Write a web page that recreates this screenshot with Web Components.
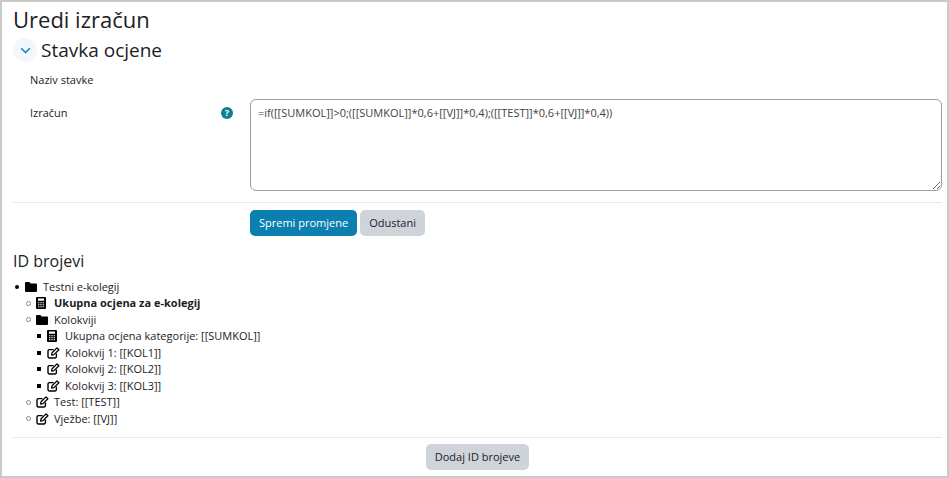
<!DOCTYPE html>
<html>
<head>
<meta charset="utf-8">
<title>Uredi izračun</title>
<style>
    html, body { margin: 0; padding: 0; background: #fff; }
    body { font-family: "Open Sans", "Liberation Sans", sans-serif; color: #1d2125; }
</style>
</head>
<body>
<calc-page>
    <page-title>Uredi izračun</page-title>
    <section-head>Stavka ocjene</section-head>
    <form-row label="Naziv stavke" style="--top: 4px; --row-h: 33px"></form-row>
    <form-row label="Izračun" help>
        <formula-box>=if([[SUMKOL]]&gt;0;([[SUMKOL]]*0,6+[[VJ]]*0,4);([[TEST]]*0,6+[[VJ]]*0,4))</formula-box>
    </form-row>
    <h-rule style="--top: 11px"></h-rule>
    <form-row style="--top: 7px">
        <div style="display:flex;gap:3px">
            <app-button primary>Spremi promjene</app-button>
            <app-button>Odustani</app-button>
        </div>
    </form-row>
    <sub-title>ID brojevi</sub-title>
    <id-tree>
        <tree-node marker="disc" icon="folder">Testni e-kolegij
            <tree-node slot="kids" marker="circle" icon="calc"><b>Ukupna ocjena za e-kolegij</b></tree-node>
            <tree-node slot="kids" marker="circle" icon="folder">Kolokviji
                <tree-node slot="kids" marker="square" icon="calc">Ukupna ocjena kategorije: [[SUMKOL]]</tree-node>
                <tree-node slot="kids" marker="square" icon="edit">Kolokvij 1: [[KOL1]]</tree-node>
                <tree-node slot="kids" marker="square" icon="edit">Kolokvij 2: [[KOL2]]</tree-node>
                <tree-node slot="kids" marker="square" icon="edit">Kolokvij 3: [[KOL3]]</tree-node>
            </tree-node>
            <tree-node slot="kids" marker="circle" icon="edit">Test: [[TEST]]</tree-node>
            <tree-node slot="kids" marker="circle" icon="edit">Vježbe: [[VJ]]</tree-node>
        </tree-node>
    </id-tree>
    <h-rule style="--top: 9.5px"></h-rule>
    <div style="display:flex;justify-content:center;margin-top:6px">
        <app-button>Dodaj ID brojeve</app-button>
    </div>
</calc-page>

<script>
function shadow(el, html) {
    el.attachShadow({mode: 'open'}).innerHTML = html
}

class CalcPage extends HTMLElement {
    connectedCallback() {
        shadow(this, `
        <style>
            :host {
                display: block;
                box-sizing: border-box;
                width: 949px;
                height: 478px;
                border: 2px solid #c9c9c9;
                padding: 1px 5px 0 11px;
                overflow: hidden;
                font-size: 11px;
            }
        </style>
        <slot></slot>`)
    }
}

class PageTitle extends HTMLElement {
    connectedCallback() {
        shadow(this, `
        <style>
            :host { display: block; font-size: 22px; line-height: 32px; }
        </style>
        <slot></slot>`)
    }
}

class SectionHead extends HTMLElement {
    connectedCallback() {
        shadow(this, `
        <style>
            :host {
                display: flex;
                align-items: center;
                gap: 4px;
                font-size: 19px;
                line-height: 24px;
                margin-top: 3px;
            }
            .toggle {
                width: 24px;
                height: 24px;
                border-radius: 50%;
                background: #f2f7fb;
                display: flex;
                align-items: center;
                justify-content: center;
            }
        </style>
        <span class="toggle">
            <svg width="11" height="7" viewBox="0 0 11 7"><path d="M1.2 1.2l4.3 4.2 4.3-4.2" fill="none" stroke="#0f7cb5" stroke-width="1.4"/></svg>
        </span>
        <slot></slot>`)
    }
}

class FormRow extends HTMLElement {
    connectedCallback() {
        const label = this.getAttribute('label') || ''
        const help = this.hasAttribute('help')
            ? `<svg class="help" width="12" height="12" viewBox="0 0 12 12"><circle cx="6" cy="6" r="6" fill="#0f7f8f"/><text x="6" y="9.2" text-anchor="middle" font-size="9" font-weight="700" font-family="Open Sans" fill="#fff">?</text></svg>`
            : ''
        shadow(this, `
        <style>
            :host {
                display: grid;
                grid-template-columns: 237px 1fr;
                margin-top: var(--top, 0);
                min-height: var(--row-h, 0);
                font-size: 11px;
            }
            .label {
                display: flex;
                align-items: flex-start;
                justify-content: space-between;
                padding: 6px 17px 0 17px;
                line-height: 16px;
            }
            .help { margin-top: 2px; }
        </style>
        <div class="label"><span>${label}</span>${help}</div>
        <div><slot></slot></div>`)
    }
}

class FormulaBox extends HTMLElement {
    connectedCallback() {
        shadow(this, `
        <style>
            :host {
                display: block;
                box-sizing: border-box;
                width: 692px;
                height: 92px;
                border: 1px solid #9aa0a6;
                border-radius: 6px;
                padding: 5px 7px;
                font-size: 11px;
                line-height: 16px;
                color: #3c4247;
                resize: both;
                overflow: auto;
            }
        </style>
        <slot></slot>`)
    }
}

class HRule extends HTMLElement {
    connectedCallback() {
        shadow(this, `
        <style>
            :host {
                display: block;
                height: 1px;
                background: #e6e8ea;
                margin-top: var(--top, 0);
            }
        </style>`)
    }
}

class AppButton extends HTMLElement {
    connectedCallback() {
        shadow(this, `
        <style>
            :host {
                display: inline-block;
                box-sizing: border-box;
                height: 26px;
                line-height: 26px;
                padding: 0 9px;
                border-radius: 5px;
                font-size: 11px;
                background: #ced4da;
                color: #1d2125;
                white-space: nowrap;
            }
            :host([primary]) {
                background: #0a7fb0;
                color: #fff;
            }
        </style>
        <slot></slot>`)
    }
}

class SubTitle extends HTMLElement {
    connectedCallback() {
        shadow(this, `
        <style>
            :host {
                display: block;
                font-size: 16px;
                line-height: 24px;
                margin-top: 13px;
            }
        </style>
        <slot></slot>`)
    }
}

class IdTree extends HTMLElement {
    connectedCallback() {
        shadow(this, `
        <style>
            :host { display: block; margin-top: 5.7px; font-size: 11px; }
        </style>
        <slot></slot>`)
    }
}

const ICONS = {
    folder: `<svg width="12" height="10" viewBox="0 0 12 10"><path d="M1 0h3.4l1.3 1.4H11a1 1 0 0 1 1 1V9a1 1 0 0 1-1 1H1a1 1 0 0 1-1-1V1a1 1 0 0 1 1-1z" fill="#000"/></svg>`,
    calc: `<svg width="10" height="12" viewBox="0 0 10 12"><path fill-rule="evenodd" fill="#000" d="M1 0h8a1 1 0 0 1 1 1v10a1 1 0 0 1-1 1H1a1 1 0 0 1-1-1V1a1 1 0 0 1 1-1zM2 1.6v2.2h6V1.6zM2 5.2v1h1.4v-1zM4.3 5.2v1h1.4v-1zM6.6 5.2v1H8v-1zM2 7.2v1h1.4v-1zM4.3 7.2v1h1.4v-1zM6.6 7.2v1H8v-1zM2 9.2v1h1.4v-1zM4.3 9.2v1h1.4v-1zM6.6 9.2v1H8v-1z"/></svg>`,
    edit: `<svg width="13" height="12" viewBox="0 0 13 12"><path d="M9.4 6.6v3a1.4 1.4 0 0 1-1.4 1.4H2.4A1.4 1.4 0 0 1 1 9.6V4a1.4 1.4 0 0 1 1.4-1.4h4.2" fill="none" stroke="#000" stroke-width="1.4"/><path d="M4.6 8l.5-2.3L10 .9l1.9 1.9-4.9 4.8z" fill="none" stroke="#000" stroke-width="1.3" stroke-linejoin="round"/></svg>`
}

class TreeNode extends HTMLElement {
    connectedCallback() {
        const marker = this.getAttribute('marker')
        const icon = ICONS[this.getAttribute('icon')]
        shadow(this, `
        <style>
            :host { display: block; line-height: 16.5px; }
            .row {
                display: grid;
                grid-template-columns: 12px 18px auto;
                justify-content: start;
                align-items: center;
                height: 16.5px;
            }
            .icon { display: flex; align-items: center; }
            .marker { box-sizing: border-box; display: block; margin-left: 2px; }
            .marker.disc { width: 4px; height: 4px; border-radius: 50%; background: #000; }
            .marker.circle { width: 5px; height: 5px; border-radius: 50%; border: 1px solid #8a8a8a; }
            .marker.square { width: 4px; height: 4px; background: #000; }
            .kids { padding-left: 11px; }
        </style>
        <div class="row">
            <span class="marker ${marker}"></span>
            <span class="icon">${icon}</span>
            <span><slot></slot></span>
        </div>
        <div class="kids"><slot name="kids"></slot></div>`)
    }
}

window.customElements.define('calc-page', CalcPage)
window.customElements.define('page-title', PageTitle)
window.customElements.define('section-head', SectionHead)
window.customElements.define('form-row', FormRow)
window.customElements.define('formula-box', FormulaBox)
window.customElements.define('h-rule', HRule)
window.customElements.define('app-button', AppButton)
window.customElements.define('sub-title', SubTitle)
window.customElements.define('id-tree', IdTree)
window.customElements.define('tree-node', TreeNode)
</script>
</body>
</html>
